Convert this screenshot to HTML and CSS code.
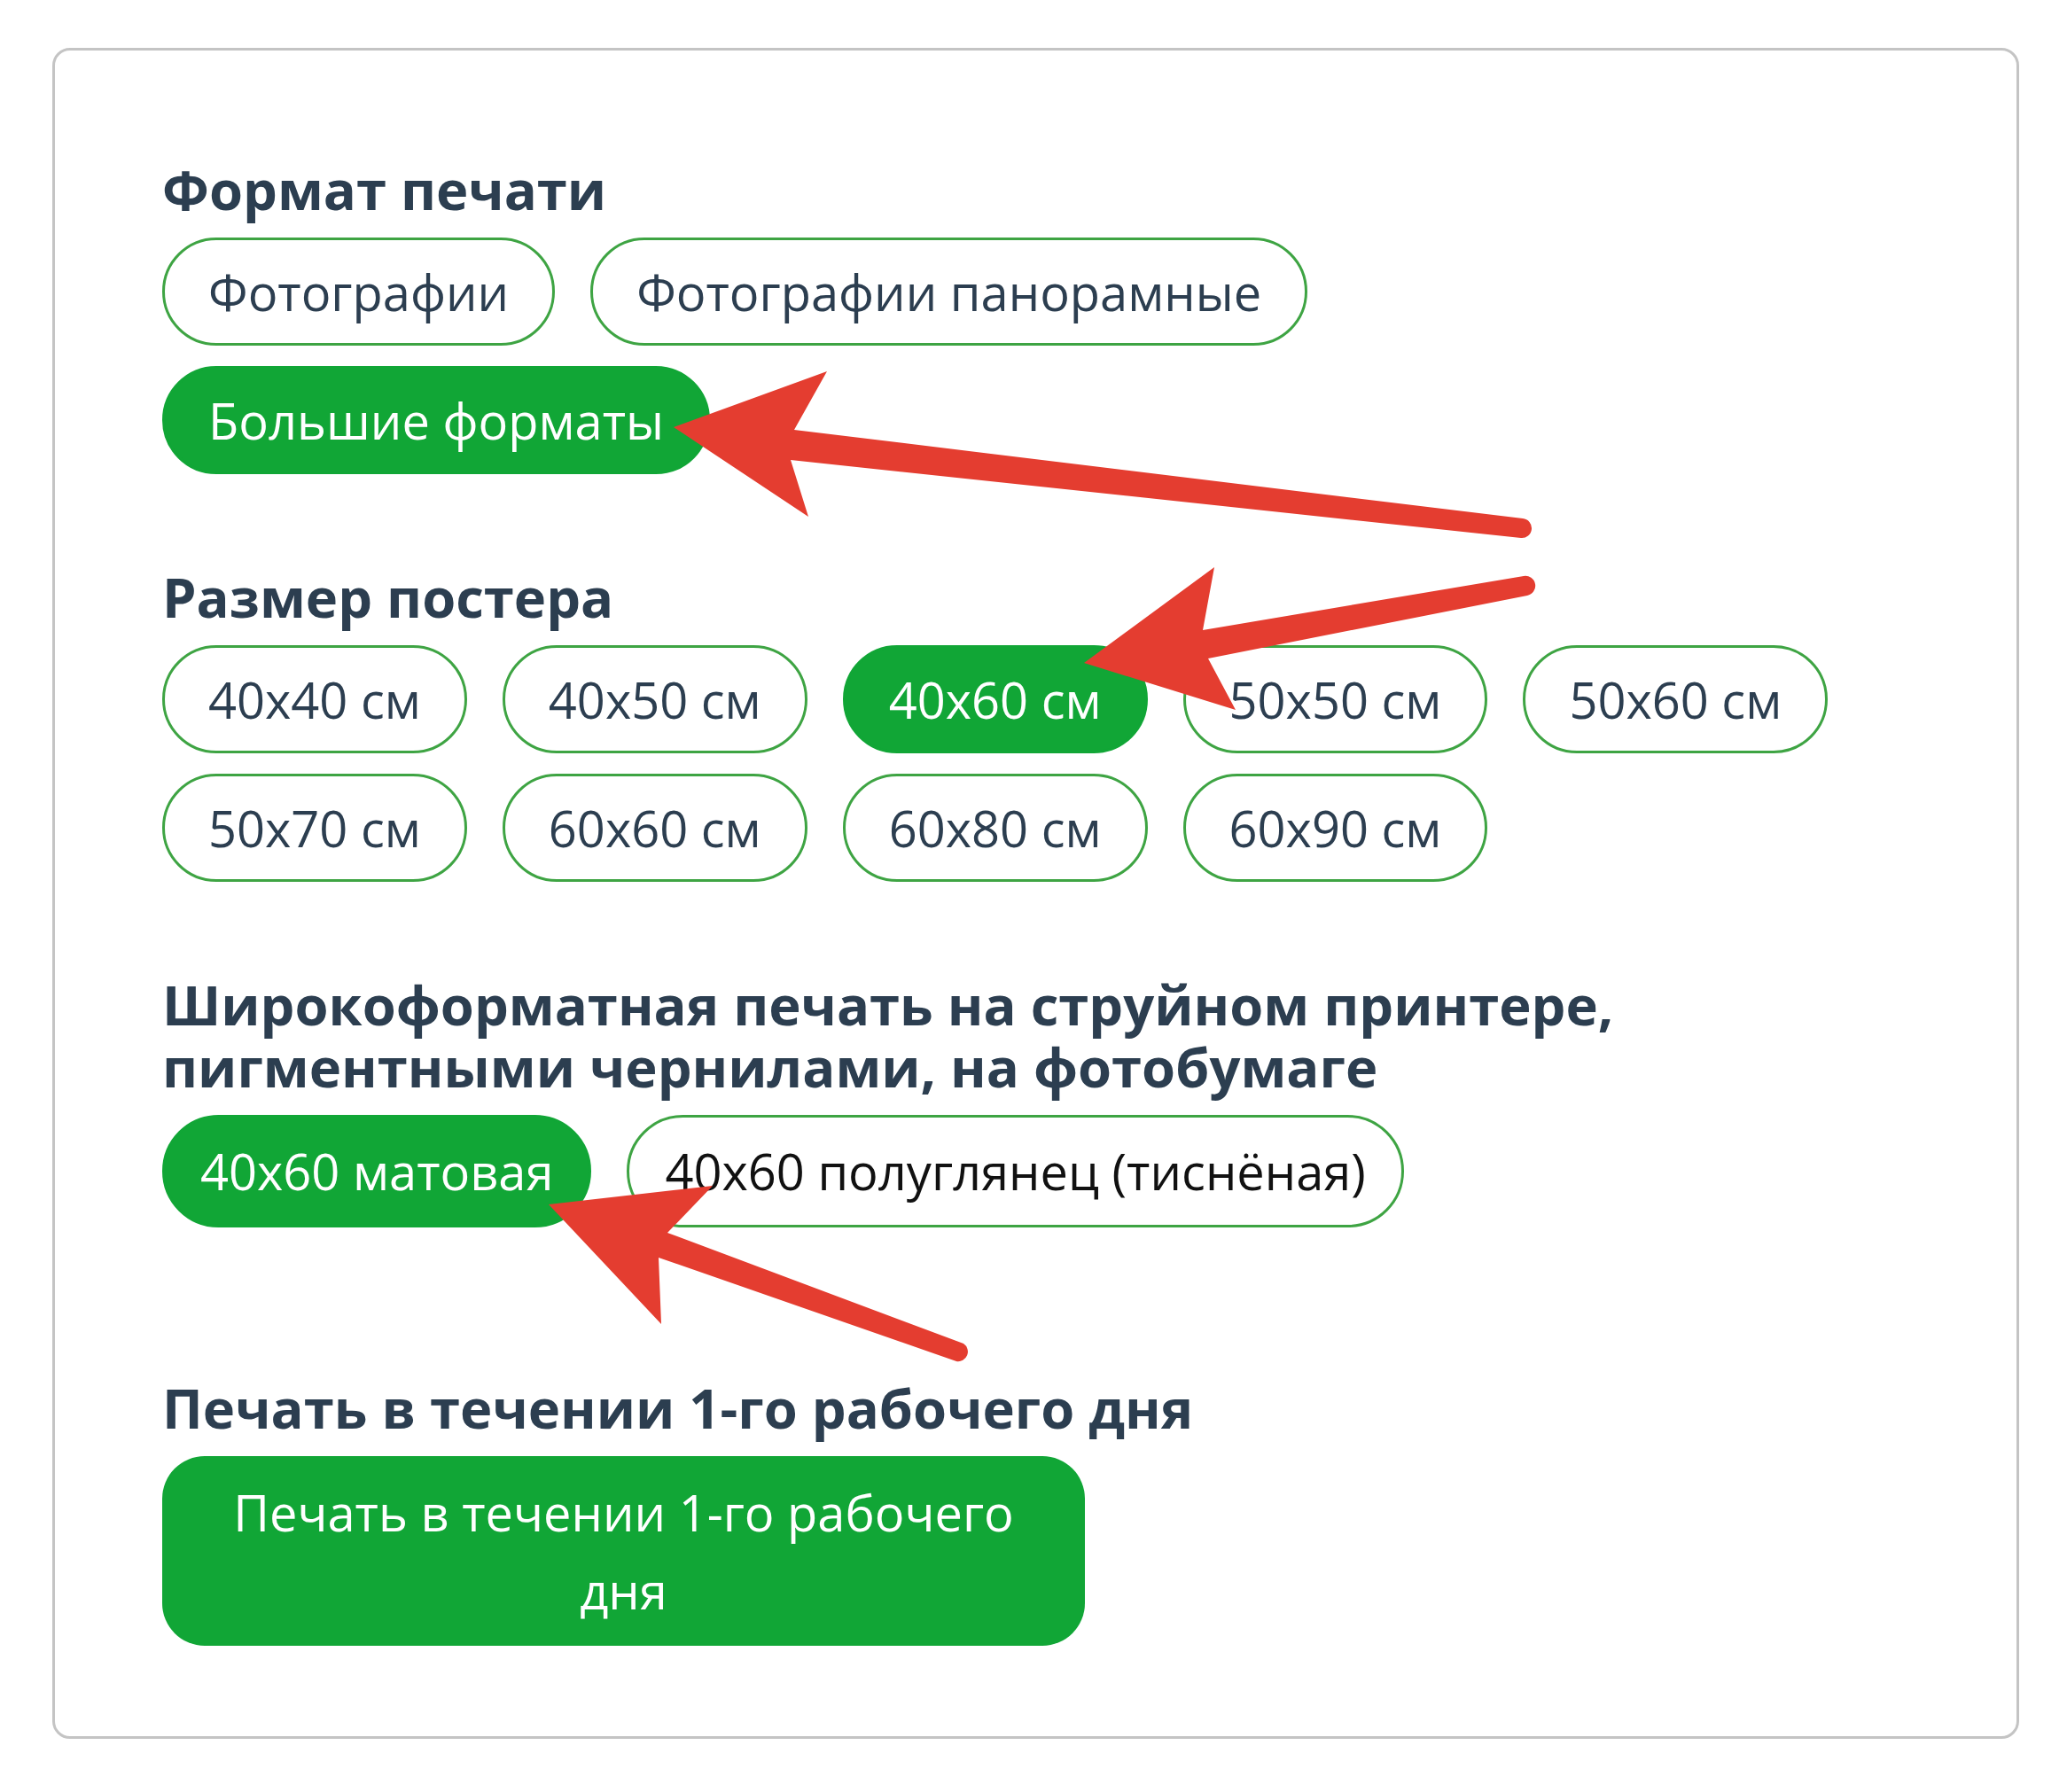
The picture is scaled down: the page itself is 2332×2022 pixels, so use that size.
FILE: index.html
```html
<!DOCTYPE html>
<html lang="ru">
<head>
    <meta charset="UTF-8">
    <meta name="viewport" content="width=device-width, initial-scale=1.0">
    <title>Печать постеров</title>
    <link rel="stylesheet" href="styles.css">
</head>
<body>
    <div class="card">

        <div class="group">
            <h3 class="group-title">Формат печати</h3>
            <div class="options">
                <button class="opt">Фотографии</button>
                <button class="opt">Фотографии панорамные</button>
                <button class="opt active">Большие форматы</button>
            </div>
        </div>

        <div class="group">
            <h3 class="group-title">Размер постера</h3>
            <div class="options">
                <button class="opt">40x40 см</button>
                <button class="opt">40x50 см</button>
                <button class="opt active">40x60 см</button>
                <button class="opt">50x50 см</button>
                <button class="opt">50x60 см</button>
                <button class="opt">50x70 см</button>
                <button class="opt">60x60 см</button>
                <button class="opt">60x80 см</button>
                <button class="opt">60x90 см</button>
            </div>
        </div>

        <div class="group">
            <h3 class="group-title">Широкоформатная печать на струйном принтере, пигментными чернилами, на фотобумаге</h3>
            <div class="options">
                <button class="opt paper active">40x60 матовая</button>
                <button class="opt paper plain">40x60 полуглянец (тиснёная)</button>
            </div>
        </div>

        <div class="group group-last">
            <h3 class="group-title">Печать в течении 1-го рабочего дня</h3>
            <button class="big-btn">Печать в течении 1-го рабочего дня</button>
        </div>

    </div>

    <!-- стрелки поверх скриншота -->
    <svg class="marks" width="2332" height="2022" viewBox="0 0 2332 2022">
        <path d="M760 482 L933 419 L896 485 L1718 585 A11 11 0 0 1 1716 607 L892 519 L912 583 Z"/>
        <path d="M1223 748 L1370 640 L1357 711 L1719 650 A11 11 0 0 1 1723 672 L1363 743 L1394 801 Z"/>
        <path d="M619 1359 L804 1338 L753 1391 L1087 1516 A11 11 0 0 1 1079 1536 L743 1419 L746 1494 Z"/>
    </svg>
</body>
</html>
```

FILE: styles.css
```css
body{
    margin: 0;
    font-family: "Open Sans", "Noto Sans", sans-serif;
    background-color: #fff;
    position: relative;
    min-height: 2022px;
}
.card{
    box-sizing: border-box;
    width: 2219px;
    margin: 54px 0 0 59px;
    padding: 121px 189px 102px 121px;
    border: 3px solid #c4c4c4;
    border-radius: 20px;
}
.group + .group{
    margin-top: 103px;
}
.group-last{
    margin-top: 168px !important;
}
.group-title{
    margin: 0 0 20px;
    font-size: 61.5px;
    line-height: 70px;
    font-weight: 700;
    color: #2c3e50;
}
.options{
    display: flex;
    flex-wrap: wrap;
    gap: 23px 40px;
}
.opt{
    font-family: inherit;
    font-size: 56px;
    line-height: 76px;
    padding: 20px 49px;
    color: #2c3e50;
    background: #fff;
    border: 3px solid #3ea443;
    border-radius: 64px;
    cursor: pointer;
}
.opt.paper{
    padding: 22px 40px 23px;
}
.opt.plain{
    color: #111;
}
.opt.active{
    background: #11a636;
    border-color: #11a636;
    color: #fff;
}
.big-btn{
    box-sizing: border-box;
    width: 1041px;
    padding: 19px 50px;
    font-family: inherit;
    font-size: 56px;
    line-height: 88px;
    text-align: center;
    color: #fff;
    background: #11a636;
    border: 0;
    border-radius: 48px;
    cursor: pointer;
}
.marks{
    position: absolute;
    left: 0;
    top: 0;
    pointer-events: none;
}
.marks path{
    fill: #e43d30;
}
```
